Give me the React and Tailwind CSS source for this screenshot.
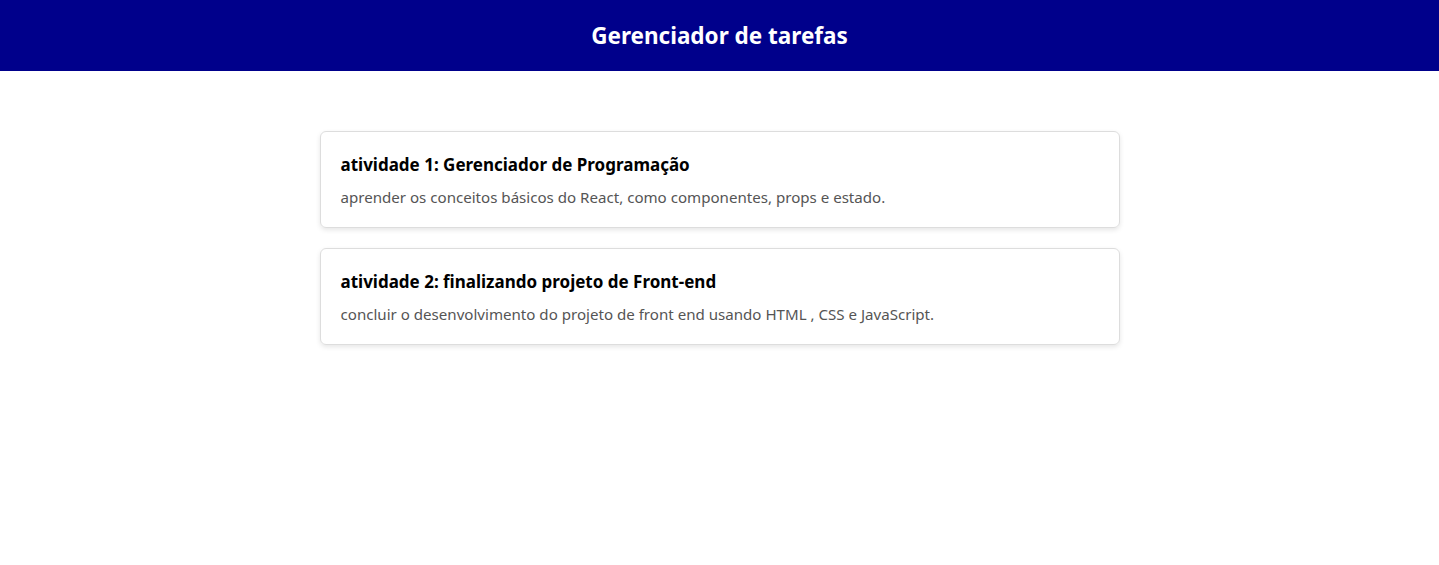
import React from "react";

const tarefas = [
  {
    titulo: "atividade 1: Gerenciador de Programação",
    descricao:
      "aprender os conceitos básicos do React, como componentes, props e estado.",
  },
  {
    titulo: "atividade 2: finalizando projeto de Front-end",
    descricao:
      "concluir o desenvolvimento do projeto de front end usando HTML , CSS e JavaScript.",
  },
];

const App = () => {
  return (
    <div className="min-h-screen bg-white font-['Noto_Sans',sans-serif]">
      <header className="h-[71px] bg-[#00008b] flex items-center justify-center">
        <h1 className="text-[22.5px] font-bold text-white">Gerenciador de tarefas</h1>
      </header>
      <main className="w-[800px] mx-auto mt-[60px] flex flex-col gap-[20px]">
        {tarefas.map((t) => (
          <div
            key={t.titulo}
            className="h-[97px] border border-[#dddddd] rounded-[6px] px-5 pt-[21px] shadow-[0_2px_5px_rgba(0,0,0,0.1)]"
          >
            <h3 className="text-[17px] font-bold text-black leading-[24px]">{t.titulo}</h3>
            <p className="mt-[10px] text-[15.1px] text-[#555555] leading-[20px]">{t.descricao}</p>
          </div>
        ))}
      </main>
    </div>
  );
};

export default App;
